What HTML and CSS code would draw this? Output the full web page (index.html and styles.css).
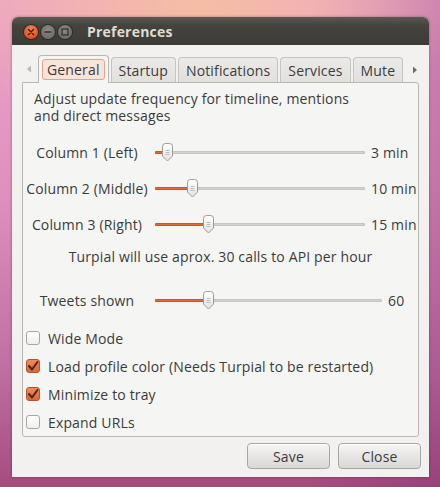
FILE: index.html
```html
<!DOCTYPE html>
<html>
<head>
<meta charset="utf-8">
<link rel="stylesheet" href="styles.css">
</head>
<body>
<div class="desktop">
  <div class="window">
    <div class="titlebar">
      <div class="wm-buttons">
        <span class="wm wm-close"><svg width="14" height="14" viewBox="0 0 14 14"><path d="M4.5 4.5 L9.5 9.5 M9.5 4.5 L4.5 9.5" stroke="#3a1a0c" stroke-width="1.4" stroke-linecap="round"/></svg></span>
        <span class="wm wm-min"><svg width="14" height="14" viewBox="0 0 14 14"><path d="M3.5 7 H10.5" stroke="#2f2e2b" stroke-width="1.4"/></svg></span>
        <span class="wm wm-max"><svg width="14" height="14" viewBox="0 0 14 14"><rect x="4" y="4" width="6" height="6" fill="none" stroke="#2f2e2b" stroke-width="1.2"/></svg></span>
      </div>
      <div class="title">Preferences</div>
    </div>
    <div class="window-body">
      <div class="tabs">
        <span class="tab-arrow"><svg width="8" height="10" viewBox="0 0 8 10"><path d="M6 1.5 L2 5 L6 8.5 Z" fill="#b9b7b3"/></svg></span>
        <div class="tab tab-active"><span class="tab-focus">General</span></div>
        <div class="tab">Startup</div>
        <div class="tab">Notifications</div>
        <div class="tab">Services</div>
        <div class="tab">Mute</div>
        <span class="tab-arrow tab-arrow-right"><svg width="8" height="10" viewBox="0 0 8 10"><path d="M2 1.5 L6 5 L2 8.5 Z" fill="#6e6c68"/></svg></span>
      </div>
      <div class="frame">
        <p class="intro">Adjust update frequency for timeline, mentions<br>and direct messages</p>

        <div class="slider-row slider-row-first">
          <div class="slider-label">Column 1 (Left)</div>
          <div class="slider">
            <div class="track"><div class="fill" style="width:12px"></div></div>
            <svg class="knob" style="left:6px" width="13" height="19" viewBox="0 0 13 19"><defs><linearGradient id="k1" x1="0" y1="0" x2="0" y2="1"><stop offset="0" stop-color="#ffffff"/><stop offset="1" stop-color="#e6e5e2"/></linearGradient></defs><path d="M1.5 3.5 Q1.5 0.5 4.5 0.5 H8.5 Q11.5 0.5 11.5 3.5 V13 L6.5 18 L1.5 13 Z" fill="url(#k1)" stroke="#9c9a95"/><path d="M4.5 7.5 H8.5 M4.5 9.5 H8.5 M4.5 11.5 H8.5" stroke="#bdbbb6" stroke-width="1"/></svg>
          </div>
          <div class="slider-value">3 min</div>
        </div>

        <div class="slider-row">
          <div class="slider-label">Column 2 (Middle)</div>
          <div class="slider">
            <div class="track"><div class="fill" style="width:37px"></div></div>
            <svg class="knob" style="left:31px" width="13" height="19" viewBox="0 0 13 19"><path d="M1.5 3.5 Q1.5 0.5 4.5 0.5 H8.5 Q11.5 0.5 11.5 3.5 V13 L6.5 18 L1.5 13 Z" fill="url(#k1)" stroke="#9c9a95"/><path d="M4.5 7.5 H8.5 M4.5 9.5 H8.5 M4.5 11.5 H8.5" stroke="#bdbbb6" stroke-width="1"/></svg>
          </div>
          <div class="slider-value">10 min</div>
        </div>

        <div class="slider-row">
          <div class="slider-label">Column 3 (Right)</div>
          <div class="slider">
            <div class="track"><div class="fill" style="width:53px"></div></div>
            <svg class="knob" style="left:47px" width="13" height="19" viewBox="0 0 13 19"><path d="M1.5 3.5 Q1.5 0.5 4.5 0.5 H8.5 Q11.5 0.5 11.5 3.5 V13 L6.5 18 L1.5 13 Z" fill="url(#k1)" stroke="#9c9a95"/><path d="M4.5 7.5 H8.5 M4.5 9.5 H8.5 M4.5 11.5 H8.5" stroke="#bdbbb6" stroke-width="1"/></svg>
          </div>
          <div class="slider-value">15 min</div>
        </div>

        <p class="calls">Turpial will use aprox. 30 calls to API per hour</p>

        <div class="slider-row slider-row-tweets">
          <div class="slider-label">Tweets shown</div>
          <div class="slider">
            <div class="track"><div class="fill" style="width:53px"></div></div>
            <svg class="knob" style="left:47px" width="13" height="19" viewBox="0 0 13 19"><path d="M1.5 3.5 Q1.5 0.5 4.5 0.5 H8.5 Q11.5 0.5 11.5 3.5 V13 L6.5 18 L1.5 13 Z" fill="url(#k1)" stroke="#9c9a95"/><path d="M4.5 7.5 H8.5 M4.5 9.5 H8.5 M4.5 11.5 H8.5" stroke="#bdbbb6" stroke-width="1"/></svg>
          </div>
          <div class="slider-value slider-value-short">60</div>
        </div>

        <div class="checks">
          <div class="check"><span class="box"></span><span>Wide Mode</span></div>
          <div class="check"><span class="box box-on"><svg width="14" height="14" viewBox="0 0 14 14"><path d="M3 7 L6 10.5 L11.5 3" fill="none" stroke="#4a2414" stroke-width="2" stroke-linecap="round" stroke-linejoin="round"/></svg></span><span>Load profile color (Needs Turpial to be restarted)</span></div>
          <div class="check"><span class="box box-on"><svg width="14" height="14" viewBox="0 0 14 14"><path d="M3 7 L6 10.5 L11.5 3" fill="none" stroke="#4a2414" stroke-width="2" stroke-linecap="round" stroke-linejoin="round"/></svg></span><span>Minimize to tray</span></div>
          <div class="check"><span class="box"></span><span>Expand URLs</span></div>
        </div>
      </div>
      <div class="buttons">
        <button class="btn">Save</button>
        <button class="btn">Close</button>
      </div>
    </div>
  </div>
</div>
</body>
</html>
```
FILE: styles.css
```css
html, body {
  margin: 0;
  padding: 0;
}
body {
  width: 440px;
  height: 487px;
  overflow: hidden;
  font-family: "Open Sans", "DejaVu Sans", sans-serif;
  font-size: 14px;
  letter-spacing: 0.15px;
  color: #3c3c3c;
}
.desktop {
  width: 440px;
  height: 487px;
  box-sizing: border-box;
  padding: 17px 11px 0 12px;
  background:
    radial-gradient(ellipse 260px 150px at 45% 0%, rgba(246,192,160,0.95), rgba(246,192,160,0) 100%),
    linear-gradient(90deg, rgba(0,0,0,0) 0%, rgba(0,0,0,0) 70%, rgba(120,40,110,0.28) 100%),
    linear-gradient(180deg, #eca4c8 0%, #df90bd 40%, #c070a2 75%, #a54c7f 100%);
}
.window {
  width: 417px;
  height: 460px;
  display: flex;
  flex-direction: column;
  border-radius: 6px 6px 0 0;
  background: #f2f1f0;
  box-shadow: 0 0 3px rgba(0,0,0,0.35);
}
.titlebar {
  height: 28px;
  flex: none;
  display: flex;
  align-items: center;
  border-radius: 6px 6px 0 0;
  background: linear-gradient(180deg, #5a5852 0%, #45433e 30%, #3c3b37 100%);
}
.wm-buttons {
  display: flex;
  gap: 3px;
  padding-left: 12px;
  padding-top: 1px;
}
.wm {
  width: 14px;
  height: 14px;
  border-radius: 50%;
  display: flex;
}
.wm-close {
  background: radial-gradient(circle at 50% 35%, #f58456, #e2531c 70%, #c8461a);
  box-shadow: 0 0 0 1px rgba(0,0,0,0.35);
}
.wm-min, .wm-max {
  background: radial-gradient(circle at 50% 35%, #8a8984, #6f6e69 70%, #5e5d58);
  box-shadow: 0 0 0 1px rgba(0,0,0,0.35);
}
.title {
  margin-left: 15px;
  font-weight: bold;
  font-size: 14px;
  color: #dfdbd2;
  letter-spacing: 0.2px;
}
.window-body {
  flex: 1;
  display: flex;
  flex-direction: column;
  padding: 10px 8px 8px 10px;
}
.tabs {
  height: 27px;
  display: flex;
  align-items: flex-end;
  gap: 2px;
  margin-right: 2px;
}
.tab-arrow {
  flex: none;
  width: 14px;
  height: 27px;
  display: flex;
  align-items: center;
  justify-content: center;
}
.tab-arrow-right {
  margin-left: 3px;
  height: 25px;
}
.tab {
  flex: none;
  height: 25px;
  box-sizing: border-box;
  padding: 1px 7px 0;
  display: flex;
  align-items: center;
  border: 1px solid #c6c4bf;
  border-bottom: none;
  border-radius: 4px 4px 0 0;
  background: linear-gradient(180deg, #ebeae8, #e1e0dd);
  color: #3c3c3c;
}
.tab-active {
  padding: 0 3px;
  background: #f5f5f4;
  border-color: #b9b7b2;
  position: relative;
  z-index: 1;
  margin-bottom: -1px;
  height: 28px;
}
.tab-focus {
  display: flex;
  align-items: center;
  height: 19px;
  padding: 0 4px;
  border: 1px solid #e2a48c;
  border-radius: 3px;
  background: #f9e4da;
}
.frame {
  height: 355px;
  box-sizing: border-box;
  border: 1px solid #b9b7b2;
  border-radius: 0 3px 3px 3px;
  background: #f5f5f4;
  padding-top: 7px;
  display: flex;
  flex-direction: column;
  margin-right: 2px;
}
.intro {
  margin: 0;
  padding-left: 11px;
  line-height: 17px;
}
.slider-row {
  height: 36px;
  display: flex;
  align-items: center;
  padding: 0 5px 0 3px;
}
.slider-row-first {
  margin-top: 10px;
}
.slider-label {
  width: 122px;
  text-align: center;
  white-space: nowrap;
}
.slider {
  flex: 1;
  height: 20px;
  margin: 0 6px 0 7px;
  position: relative;
  display: flex;
  align-items: center;
}
.track {
  flex: 1;
  height: 3px;
  border-radius: 2px;
  background: #d6d4d0;
  box-shadow: inset 0 0 0 1px #c6c4bf;
  display: flex;
}
.fill {
  height: 3px;
  border-radius: 2px;
  background: #e26a37;
  box-shadow: inset 0 0 0 1px #c9572a;
}
.knob {
  position: absolute;
  top: 1px;
}
.slider-value {
  width: 42px;
  white-space: nowrap;
}
.slider-value-short {
  width: 25px;
}
.calls {
  margin: 0;
  height: 30px;
  line-height: 30px;
  text-align: center;
}
.slider-row-tweets {
  margin-top: 10px;
}
.checks {
  margin-top: 6px;
  display: flex;
  flex-direction: column;
}
.check {
  height: 28px;
  display: flex;
  align-items: center;
  padding-left: 3px;
  gap: 8px;
  white-space: nowrap;
}
.box {
  width: 14px;
  height: 14px;
  box-sizing: border-box;
  border: 1px solid #a8a6a1;
  border-radius: 3px;
  background: linear-gradient(180deg, #ffffff, #f0efed);
  display: flex;
}
.box-on {
  border-color: #b7522a;
  background: linear-gradient(180deg, #ef8a5c, #dd6532);
}
.box-on svg {
  margin: -1px;
}
.buttons {
  margin-top: 6px;
  display: flex;
  justify-content: flex-end;
  gap: 8px;
}
.btn {
  width: 83px;
  height: 26px;
  font-family: inherit;
  font-size: 14px;
  letter-spacing: 0.15px;
  color: #3c3c3c;
  border: 1px solid #a9a7a2;
  border-radius: 4px;
  background: linear-gradient(180deg, #f6f6f5 0%, #e4e3e1 60%, #d9d8d5 100%);
  box-shadow: inset 0 1px 0 #ffffff;
  padding: 0;
}
```
